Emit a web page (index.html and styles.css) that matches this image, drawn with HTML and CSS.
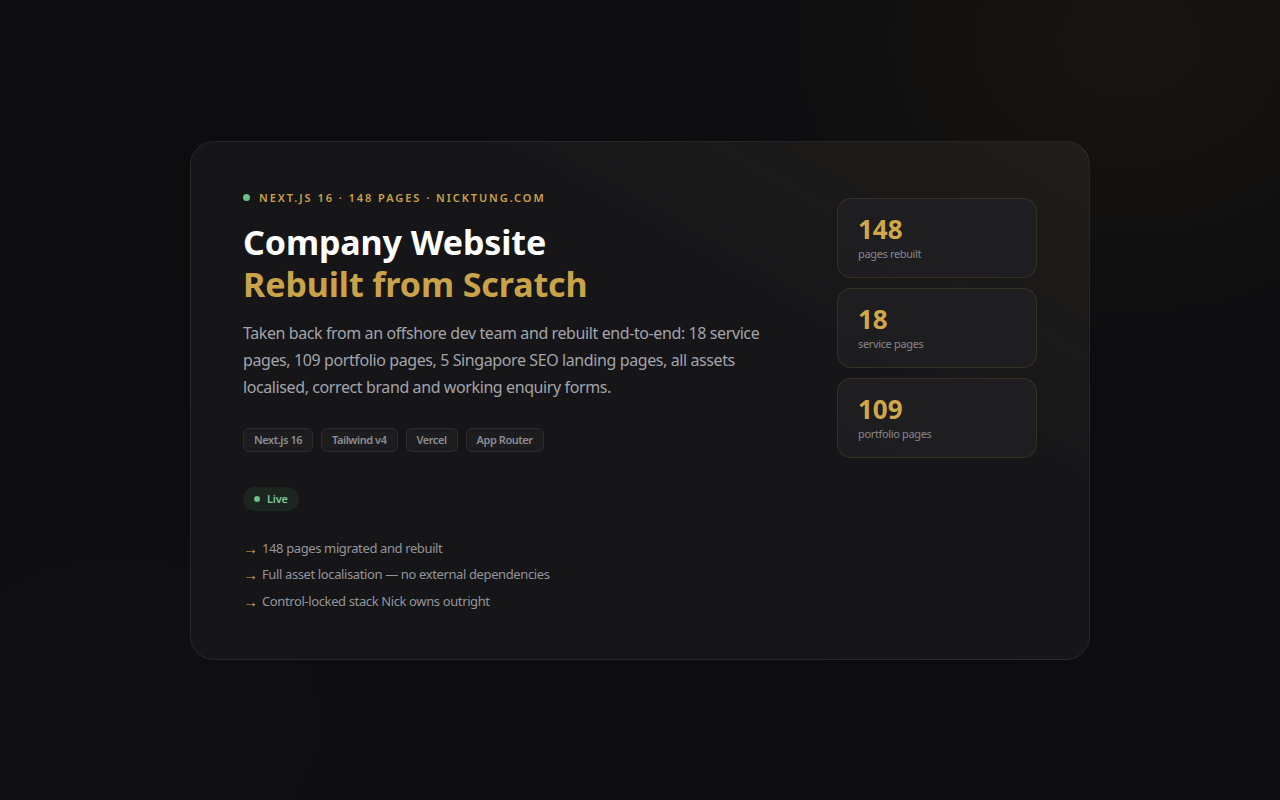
FILE: index.html
```html
<!DOCTYPE html>
<html lang="en">
<head>
<meta charset="utf-8">
<title>Company Website — Rebuilt from Scratch</title>
<link rel="stylesheet" href="styles.css">
</head>
<body>
<section class="section">
  <article class="card">
    <div class="main">
      <div class="eyebrow"><span class="dot"></span>Next.js 16 · 148 pages · nicktung.com</div>
      <h1 class="title">Company Website<br><span class="gold">Rebuilt from Scratch</span></h1>
      <p class="lead">Taken back from an offshore dev team and rebuilt end-to-end: 18 service pages, 109 portfolio pages, 5 Singapore SEO landing pages, all assets localised, correct brand and working enquiry forms.</p>
      <ul class="tags">
        <li class="tag">Next.js 16</li>
        <li class="tag">Tailwind v4</li>
        <li class="tag">Vercel</li>
        <li class="tag">App Router</li>
      </ul>
      <div class="status"><span class="pill"><span class="pill-dot"></span>Live</span></div>
      <ul class="points">
        <li><span class="arrow">→</span>148 pages migrated and rebuilt</li>
        <li><span class="arrow">→</span>Full asset localisation — no external dependencies</li>
        <li><span class="arrow">→</span>Control-locked stack Nick owns outright</li>
      </ul>
    </div>
    <aside class="stats">
      <div class="stat"><div class="num">148</div><div class="label">pages rebuilt</div></div>
      <div class="stat"><div class="num">18</div><div class="label">service pages</div></div>
      <div class="stat"><div class="num">109</div><div class="label">portfolio pages</div></div>
    </aside>
  </article>
</section>
</body>
</html>
```

FILE: styles.css
```css
* { box-sizing: border-box; }
html, body { margin: 0; padding: 0; }
body {
  background: #0d0d0f;
  font-family: "Segoe UI", "Noto Sans", "Open Sans", sans-serif;
  color: #e8e8ea;
}
.section {
  width: 100vw;
  height: 100vh;
  display: flex;
  align-items: center;
  justify-content: center;
  background:
    radial-gradient(ellipse 560px 460px at 1130px 40px, rgba(201, 162, 74, 0.06), transparent 70%),
    radial-gradient(ellipse 520px 420px at 120px 720px, rgba(110, 100, 170, 0.035), transparent 70%),
    #0d0d0f;
}
.card {
  width: 900px;
  height: 519px;
  border: 1px solid rgba(255, 255, 255, 0.065);
  border-radius: 24px;
  padding: 48px 52px 44px;
  display: flex;
  gap: 48px;
  background:
    linear-gradient(210deg, rgba(201, 162, 74, 0.05) 0%, rgba(201, 162, 74, 0) 35%),
    #161618;
}
.main { flex: 1; min-width: 0; }
.eyebrow {
  display: flex;
  align-items: center;
  gap: 9px;
  font-size: 11px;
  line-height: 16px;
  font-weight: 600;
  letter-spacing: 1.95px;
  text-transform: uppercase;
  color: #c9a24a;
}
.dot {
  width: 7px;
  height: 7px;
  border-radius: 50%;
  background: #6dbf87;
  flex: none;
}
.title {
  margin: 15px 0 0;
  font-size: 34px;
  line-height: 42px;
  font-weight: 700;
  color: #ffffff;
  letter-spacing: -0.1px;
}
.gold { color: #c9a24a; }
.lead {
  margin: 15px 0 0;
  font-size: 16px;
  line-height: 27px;
  letter-spacing: -0.4px;
  color: #a3a3aa;
}
.tags {
  list-style: none;
  margin: 27px 0 0;
  padding: 0;
  display: flex;
  gap: 8px;
}
.tag {
  height: 24px;
  padding: 0 10px;
  display: flex;
  align-items: center;
  font-size: 11px;
  font-weight: 600;
  letter-spacing: -0.45px;
  color: #8c8c93;
  background: #1d1d20;
  border: 1px solid #2c2c30;
  border-radius: 6px;
}
.status { margin-top: 35px; display: flex; }
.pill {
  height: 24px;
  padding: 0 11px;
  display: flex;
  align-items: center;
  gap: 7px;
  font-size: 11px;
  font-weight: 600;
  letter-spacing: -0.2px;
  color: #7cc796;
  background: #1d2521;
  border-radius: 999px;
}
.pill-dot {
  width: 6px;
  height: 6px;
  border-radius: 50%;
  background: #6dbf87;
}
.points {
  list-style: none;
  margin: 24px 0 0;
  padding: 0;
  font-size: 13px;
  line-height: 26.5px;
  letter-spacing: -0.38px;
  color: #94949b;
}
.points li { display: flex; align-items: center; height: 26.5px; }
.arrow {
  color: #d0a84c;
  width: 19px;
  font-size: 15px;
  line-height: 16px;
  letter-spacing: 0;
}
.stats {
  width: 200px;
  flex: none;
  margin-top: 8px;
  display: flex;
  flex-direction: column;
  gap: 10px;
}
.stat {
  height: 80px;
  padding: 16px 20px 0;
  border: 1px solid rgba(201, 162, 74, 0.14);
  border-radius: 14px;
  background:
    linear-gradient(210deg, rgba(255, 255, 255, 0.025), rgba(255, 255, 255, 0.01)),
    #1a1a1c;
}
.num {
  font-size: 26px;
  line-height: 28px;
  font-weight: 700;
  color: #d1a849;
}
.label {
  margin-top: 3px;
  font-size: 11px;
  line-height: 15px;
  letter-spacing: -0.35px;
  color: #86868d;
}
```
